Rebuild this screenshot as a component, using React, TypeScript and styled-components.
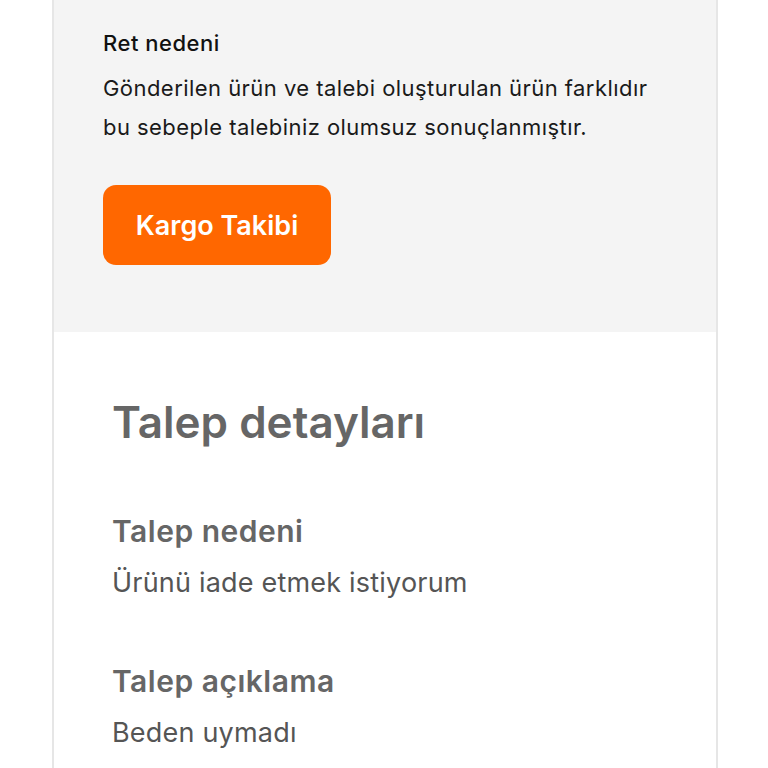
import React from "react";
import styled, { createGlobalStyle } from "styled-components";

const Global = createGlobalStyle`
  html, body { margin: 0; padding: 0; background: #ffffff; }
  body { font-family: Inter, "Noto Sans", sans-serif; -webkit-font-smoothing: antialiased; }
`;

const Page = styled.div`
  width: 768px;
  height: 768px;
  overflow: hidden;
  display: flex;
  justify-content: center;
  background: #ffffff;
`;

const Card = styled.div`
  width: 662px;
  margin-left: 2px;
  border-left: 2px solid #e6e6e6;
  border-right: 2px solid #e6e6e6;
  display: flex;
  flex-direction: column;
`;

const RejectBox = styled.section`
  background: #f4f4f4;
  height: 332px;
  box-sizing: border-box;
  padding: 30px 0 0 49px;
  display: flex;
  flex-direction: column;
  align-items: flex-start;
`;

const Label = styled.div`
  font-size: 22px;
  font-weight: 500;
  letter-spacing: 0.5px;
  color: #111;
  line-height: 26px;
`;

const Reason = styled.p`
  margin: 13px 0 0;
  font-size: 22px;
  letter-spacing: 0.45px;
  line-height: 39px;
  color: #1a1a1a;
`;

const OrangeButton = styled.button`
  margin-top: 38px;
  width: 228px;
  height: 80px;
  border: none;
  border-radius: 13px;
  background: #ff6700;
  color: #fff;
  font-family: Inter, sans-serif;
  font-size: 27px;
  font-weight: 600;
  padding: 0;
`;

const Details = styled.section`
  padding: 62px 0 0 58px;
  display: flex;
  flex-direction: column;
`;

const Title = styled.h2`
  margin: 0;
  font-size: 44px;
  font-weight: 600;
  color: #666;
  line-height: 56px;
`;

const Field = styled.div<{ $first?: boolean }>`
  margin-top: ${(p) => (p.$first ? "62px" : "60px")};
  display: flex;
  flex-direction: column;
  gap: 14px;
`;

const FieldLabel = styled.div`
  font-size: 30px;
  font-weight: 600;
  letter-spacing: 0.5px;
  color: #666;
  line-height: 38px;
`;

const FieldValue = styled.div`
  font-size: 27px;
  letter-spacing: 0.2px;
  color: #555;
  line-height: 38px;
`;

export default function App() {
  return (
    <>
      <Global />
      <Page>
        <Card>
          <RejectBox>
            <Label>Ret nedeni</Label>
            <Reason>
              Gönderilen ürün ve talebi oluşturulan ürün farklıdır
              <br />
              bu sebeple talebiniz olumsuz sonuçlanmıştır.
            </Reason>
            <OrangeButton>Kargo Takibi</OrangeButton>
          </RejectBox>
          <Details>
            <Title>Talep detayları</Title>
            <Field $first>
              <FieldLabel>Talep nedeni</FieldLabel>
              <FieldValue>Ürünü iade etmek istiyorum</FieldValue>
            </Field>
            <Field>
              <FieldLabel>Talep açıklama</FieldLabel>
              <FieldValue>Beden uymadı</FieldValue>
            </Field>
          </Details>
        </Card>
      </Page>
    </>
  );
}
